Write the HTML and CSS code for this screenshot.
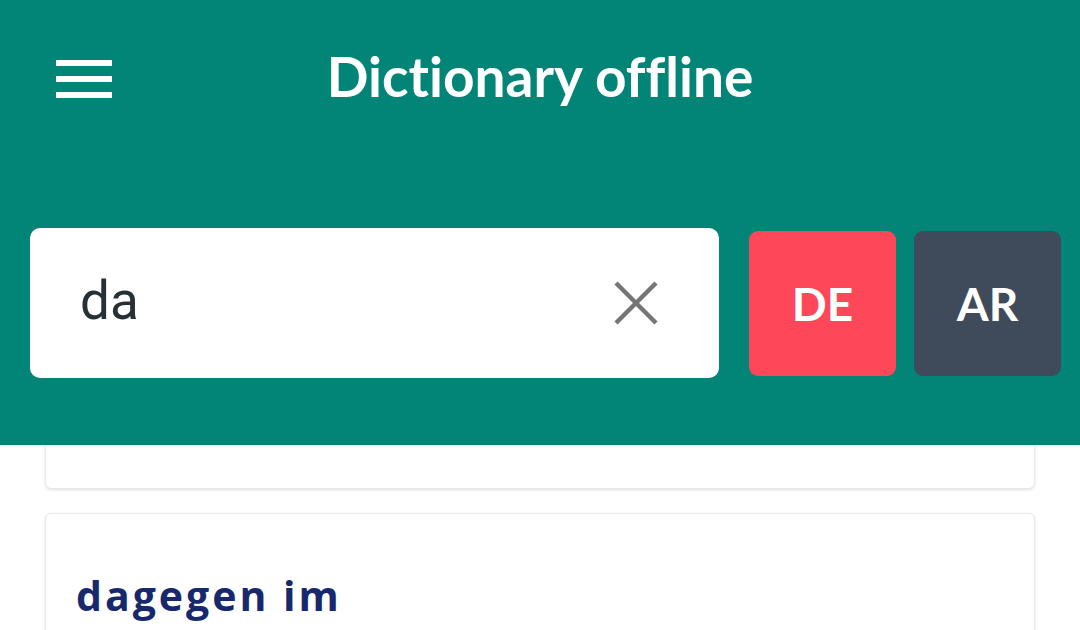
FILE: index.html
```html
<!DOCTYPE html>
<html>
<head>
<meta charset="utf-8">
<link rel="stylesheet" href="styles.css">
</head>
<body>
<div class="app">
  <header class="header">
    <div class="topbar">
      <button class="menu" aria-label="menu">
        <span></span><span></span><span></span>
      </button>
      <h1 class="title">Dictionary offline</h1>
      <div class="spacer"></div>
    </div>
    <div class="searchrow">
      <div class="search">
        <span class="query">da</span>
        <svg class="clear" width="44" height="44" viewBox="0 0 44 44">
          <path d="M2 2 L42 42 M42 2 L2 42" stroke="#757575" stroke-width="4.5" fill="none"/>
        </svg>
      </div>
      <div class="lang de">DE</div>
      <div class="lang ar">AR</div>
    </div>
  </header>
  <main class="list">
    <div class="card card-cut"></div>
    <div class="card">
      <div class="word">dagegen im</div>
    </div>
  </main>
</div>
</body>
</html>
```
FILE: styles.css
```css
html, body {
  margin: 0;
  padding: 0;
  width: 1080px;
  height: 630px;
  overflow: hidden;
  background: #ffffff;
}
.app {
  display: flex;
  flex-direction: column;
  height: 630px;
}
.header {
  background: #028576;
  height: 445px;
  flex: none;
  display: flex;
  flex-direction: column;
}
.topbar {
  height: 158px;
  display: grid;
  grid-template-columns: 1fr auto 1fr;
  align-items: center;
}
.menu {
  margin-left: 56px;
  width: 56px;
  height: 38px;
  padding: 0;
  border: 0;
  background: none;
  display: flex;
  flex-direction: column;
  justify-content: space-between;
}
.menu span {
  display: block;
  width: 56px;
  height: 6px;
  background: #ffffff;
}
.title {
  margin: -6px 0 0 0;
  font-family: Lato, "Open Sans", sans-serif;
  font-weight: 700;
  font-size: 55px;
  color: #ffffff;
  font-variant-ligatures: none;
  letter-spacing: 0;
}
.searchrow {
  margin-top: 70px;
  display: flex;
  align-items: center;
  padding-left: 30px;
}
.search {
  width: 689px;
  height: 150px;
  box-sizing: border-box;
  background: #ffffff;
  border-radius: 10px;
  display: flex;
  align-items: center;
  justify-content: space-between;
  padding: 0 61px 0 50px;
}
.query {
  font-family: Roboto, sans-serif;
  font-size: 53px;
  color: #263035;
  margin-top: -4px;
}
.clear {
  display: block;
}
.lang {
  width: 147px;
  height: 145px;
  border-radius: 9px;
  display: flex;
  align-items: center;
  justify-content: center;
  font-family: Lato, sans-serif;
  font-weight: 700;
  font-size: 46px;
  color: #ffffff;
}
.de {
  background: #fe4759;
  margin-left: 30px;
}
.ar {
  background: #3f4a5a;
  margin-left: 18px;
}
.list {
  flex: 1;
  overflow: hidden;
  padding: 0 45px;
  display: flex;
  flex-direction: column;
  gap: 24px;
}
.card {
  background: #ffffff;
  border: 1px solid #e9e9e9;
  border-radius: 6px;
  box-shadow: 0 1px 3px rgba(0,0,0,0.12);
  flex: none;
  height: 200px;
  box-sizing: border-box;
}
.card-cut {
  margin-top: -156px;
  border-top: 0;
}
.word {
  padding: 53px 0 0 30px;
  font-family: "Open Sans", sans-serif;
  font-weight: 700;
  font-size: 41px;
  color: #17296c;
  letter-spacing: 3px;
}
```
